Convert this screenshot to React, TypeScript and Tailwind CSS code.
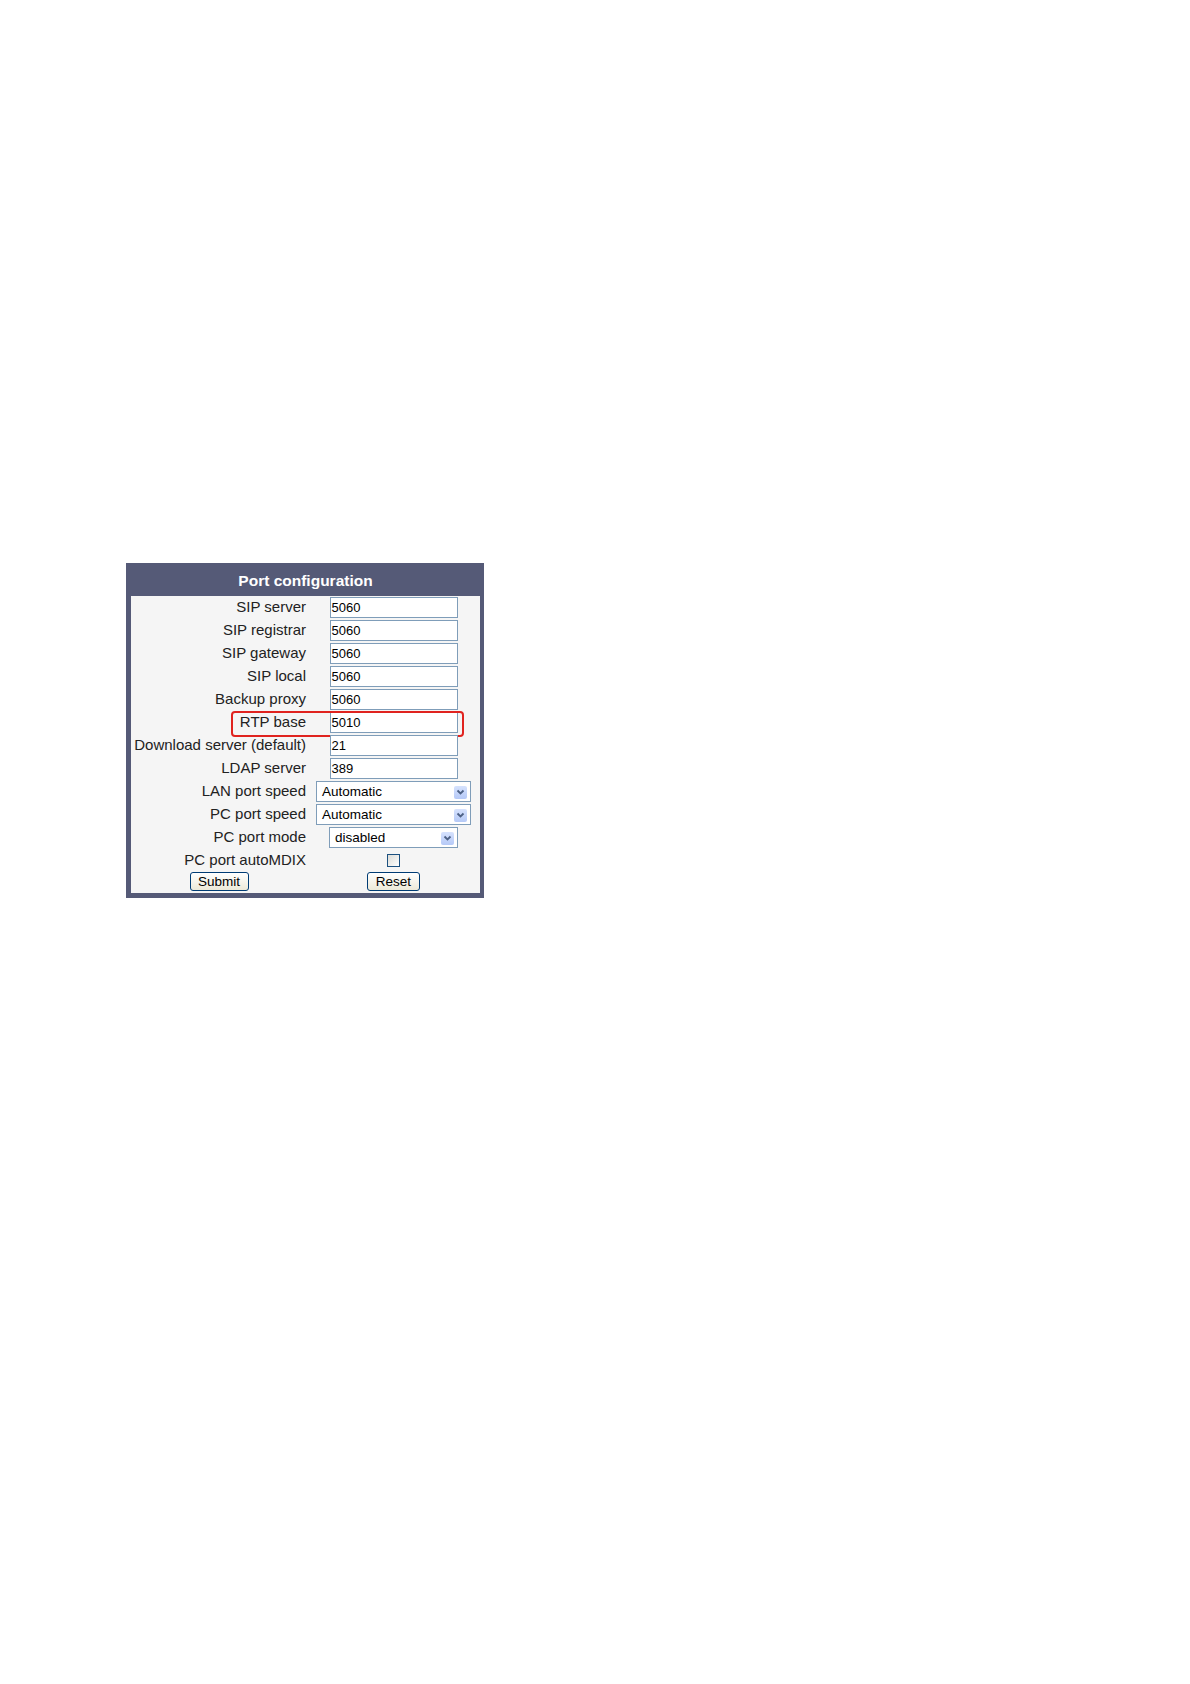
import React from "react";

const fields: { label: string; value: string }[] = [
  { label: "SIP server", value: "5060" },
  { label: "SIP registrar", value: "5060" },
  { label: "SIP gateway", value: "5060" },
  { label: "SIP local", value: "5060" },
  { label: "Backup proxy", value: "5060" },
  { label: "RTP base", value: "5010" },
  { label: "Download server (default)", value: "21" },
  { label: "LDAP server", value: "389" },
];

function Chevron() {
  return (
    <span className="flex h-[13px] w-[13px] items-center justify-center rounded-[2px] bg-gradient-to-b from-[#d6e2fd] to-[#b5c9f7]">
      <svg width="9" height="7" viewBox="0 0 9 7">
        <path d="M1.5 1.5 L4.5 4.5 L7.5 1.5" fill="none" stroke="#4d6185" strokeWidth="1.8" />
      </svg>
    </span>
  );
}

function FakeSelect({ value, wide }: { value: string; wide: boolean }) {
  return (
    <div
      className={
        wide
          ? "flex h-[21px] w-[155px] items-center justify-between border border-[#7f9db9] bg-white pl-[5px] pr-[3px] pt-[1px] text-[13.5px]"
          : "flex h-[21px] w-[129px] items-center justify-between border border-[#7f9db9] bg-white pl-[5px] pr-[3px] pt-[1px] text-[13.5px]"
      }
    >
      <span>{value}</span>
      <Chevron />
    </div>
  );
}

function Label({ children }: { children: React.ReactNode }) {
  return (
    <div className="flex items-center justify-end pr-[1px] text-[15px] text-[#222]">
      {children}
    </div>
  );
}

export default function App() {
  return (
    <div
      className="min-h-[1684px] w-full bg-white pl-[126px] pt-[563px]"
      style={{ fontFamily: '"Liberation Sans", Arial, sans-serif' }}
    >
      <div className="w-[358px] bg-[#555a77] pb-[5px] pl-[5px] pr-[4px]">
        <div className="flex h-[33px] items-center justify-center pt-[3px] text-[15.5px] font-bold text-white">
          Port configuration
        </div>
        <div className="bg-[#f5f5f5]">
          {fields.map((f) => (
            <div key={f.label} className="relative grid h-[23px] grid-cols-[176px_173px]">
              <Label>{f.label}</Label>
              <div className="flex items-center justify-center">
                <div className="flex h-[21px] w-[128px] items-center border border-[#7f9db9] bg-white pl-[1px] text-[13px] text-black">
                  {f.value}
                </div>
              </div>
              {f.label === "RTP base" && (
                <div className="pointer-events-none absolute left-[100px] top-0 h-[26px] w-[233px] rounded-[4px] border-2 border-[#e0231f]" />
              )}
            </div>
          ))}
          <div className="grid h-[23px] grid-cols-[176px_173px]">
            <Label>LAN port speed</Label>
            <div className="flex items-center justify-center">
              <FakeSelect value="Automatic" wide />
            </div>
          </div>
          <div className="grid h-[23px] grid-cols-[176px_173px]">
            <Label>PC port speed</Label>
            <div className="flex items-center justify-center">
              <FakeSelect value="Automatic" wide />
            </div>
          </div>
          <div className="grid h-[23px] grid-cols-[176px_173px]">
            <Label>PC port mode</Label>
            <div className="flex items-center justify-center">
              <FakeSelect value="disabled" wide={false} />
            </div>
          </div>
          <div className="grid h-[20px] grid-cols-[176px_173px]">
            <Label>PC port autoMDIX</Label>
            <div className="flex items-center justify-center">
              <div className="h-[13px] w-[13px] border border-[#1c5180] bg-gradient-to-br from-[#dcdcd7] to-white" />
            </div>
          </div>
          <div className="grid h-[24px] grid-cols-[176px_173px]">
            <div className="flex items-center justify-center">
              <button className="h-[19px] w-[59px] rounded-[3px] border border-[#003c74] bg-gradient-to-b from-white to-[#ece9d8] pt-[1px] text-[13.5px] leading-none text-black">
                Submit
              </button>
            </div>
            <div className="flex items-center justify-center">
              <button className="h-[19px] w-[53px] rounded-[3px] border border-[#003c74] bg-gradient-to-b from-white to-[#ece9d8] pt-[1px] text-[13.5px] leading-none text-black">
                Reset
              </button>
            </div>
          </div>
        </div>
      </div>
    </div>
  );
}
